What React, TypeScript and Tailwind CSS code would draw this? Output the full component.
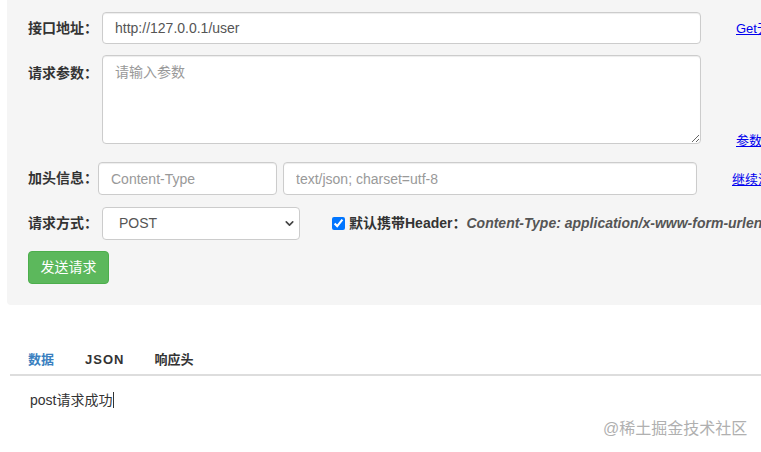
import { ChevronDown } from 'lucide-react';

const font = { fontFamily: '"Liberation Sans", Arial, "Noto Sans CJK SC", sans-serif' };

const inputCls =
  'h-full shrink-0 rounded-[4px] border border-[#cccccc] bg-white px-3 text-[14px] text-[#555555] placeholder:text-[#999999] outline-none shadow-[inset_0_1px_1px_rgba(0,0,0,0.075)]';

function Label({ text, width }: { text: string; width: string }) {
  return (
    <span className={`${width} shrink-0 text-[14px] font-bold text-[#333333]`}>{text}</span>
  );
}

function SideLink({ text }: { text: string }) {
  return (
    <a href="#" className="whitespace-nowrap text-[13px] text-[#0000ee] underline">
      {text}
    </a>
  );
}

export default function App() {
  return (
    <div className="relative h-[452px] w-[761px] overflow-hidden bg-white" style={font}>
      {/* Request form panel */}
      <div className="ml-[7px] w-[900px] rounded-b-[4px] bg-[#f5f5f5] pb-[21px] pl-[21px] pt-[12px]">
        {/* URL */}
        <div className="flex h-[32px] items-center">
          <Label text="接口地址：" width="w-[74px]" />
          <input className={`${inputCls} w-[599px]`} defaultValue="http://127.0.0.1/user" />
          <div className="ml-[35px] shrink-0">
            <SideLink text="Get无参数请求" />
          </div>
        </div>

        {/* Params */}
        <div className="mt-[11px] flex items-start">
          <span className="w-[74px] shrink-0 pt-[8px] text-[14px] font-bold text-[#333333]">
            请求参数：
          </span>
          <textarea
            className="h-[89px] w-[599px] shrink-0 rounded-[4px] border border-[#cccccc] bg-white px-3 py-[6px] text-[14px] text-[#555555] placeholder:text-[#999999] outline-none shadow-[inset_0_1px_1px_rgba(0,0,0,0.075)]"
            placeholder="请输入参数"
          />
          <div className="ml-[35px] mb-[-8px] shrink-0 self-end">
            <SideLink text="参数格式化" />
          </div>
        </div>

        {/* Headers */}
        <div className="mt-[18px] flex h-[33px] items-center">
          <Label text="加头信息：" width="w-[70px]" />
          <input className={`${inputCls} w-[179px]`} placeholder="Content-Type" />
          <input className={`${inputCls} ml-[6px] w-[414px]`} placeholder="text/json; charset=utf-8" />
          <div className="ml-[35px] shrink-0">
            <SideLink text="继续添加" />
          </div>
        </div>

        {/* Method */}
        <div className="mt-[12px] flex h-[33px] items-center">
          <Label text="请求方式：" width="w-[74px]" />
          <div className="relative h-full w-[198px] shrink-0">
            <select
              defaultValue="POST"
              className="h-full w-full appearance-none rounded-[4px] border border-[#cccccc] bg-white px-4 text-[14px] text-[#555555] outline-none"
            >
              <option>GET</option>
              <option>POST</option>
            </select>
            <ChevronDown
              size={13}
              strokeWidth={3}
              className="pointer-events-none absolute right-[4px] top-[10px] text-[#444444]"
            />
          </div>
          <label className="ml-[32px] flex shrink-0 items-center whitespace-nowrap text-[14px] font-bold">
            <input type="checkbox" defaultChecked className="mr-[4px] h-[13px] w-[13px] accent-[#0075ff]" />
            <span className="text-[#333333]">默认携带Header：</span>
            <span className="italic text-[#555555]">Content-Type: application/x-www-form-urlencoded</span>
          </label>
        </div>

        {/* Submit */}
        <button className="mt-[11px] h-[33px] w-[81px] rounded-[4px] border border-[#4cae4c] bg-[#5cb85c] text-[14px] text-white">
          发送请求
        </button>
      </div>

      {/* Response tabs */}
      <div className="ml-[10px] mt-[37px] flex border-b-2 border-[#dddddd] pl-[18px] text-[13px] font-bold">
        <span className="pb-[4px] pt-[8px] text-[#3a7fc0]">数据</span>
        <span className="ml-[31px] pb-[4px] pt-[8px] tracking-[1px] text-[#333333]">JSON</span>
        <span className="ml-[30px] pb-[4px] pt-[8px] text-[#333333]">响应头</span>
      </div>

      <div className="pl-[30px] pt-[13px] text-[14px] text-[#333333]">
        post请求成功<span className="ml-[1px] inline-block h-[16px] w-px translate-y-[3px] bg-[#333333]" />
      </div>

      {/* Watermark */}
      <span className="absolute left-[603px] top-[417px] text-[16px] text-[#b0b0b0]">@稀土掘金技术社区</span>
    </div>
  );
}
